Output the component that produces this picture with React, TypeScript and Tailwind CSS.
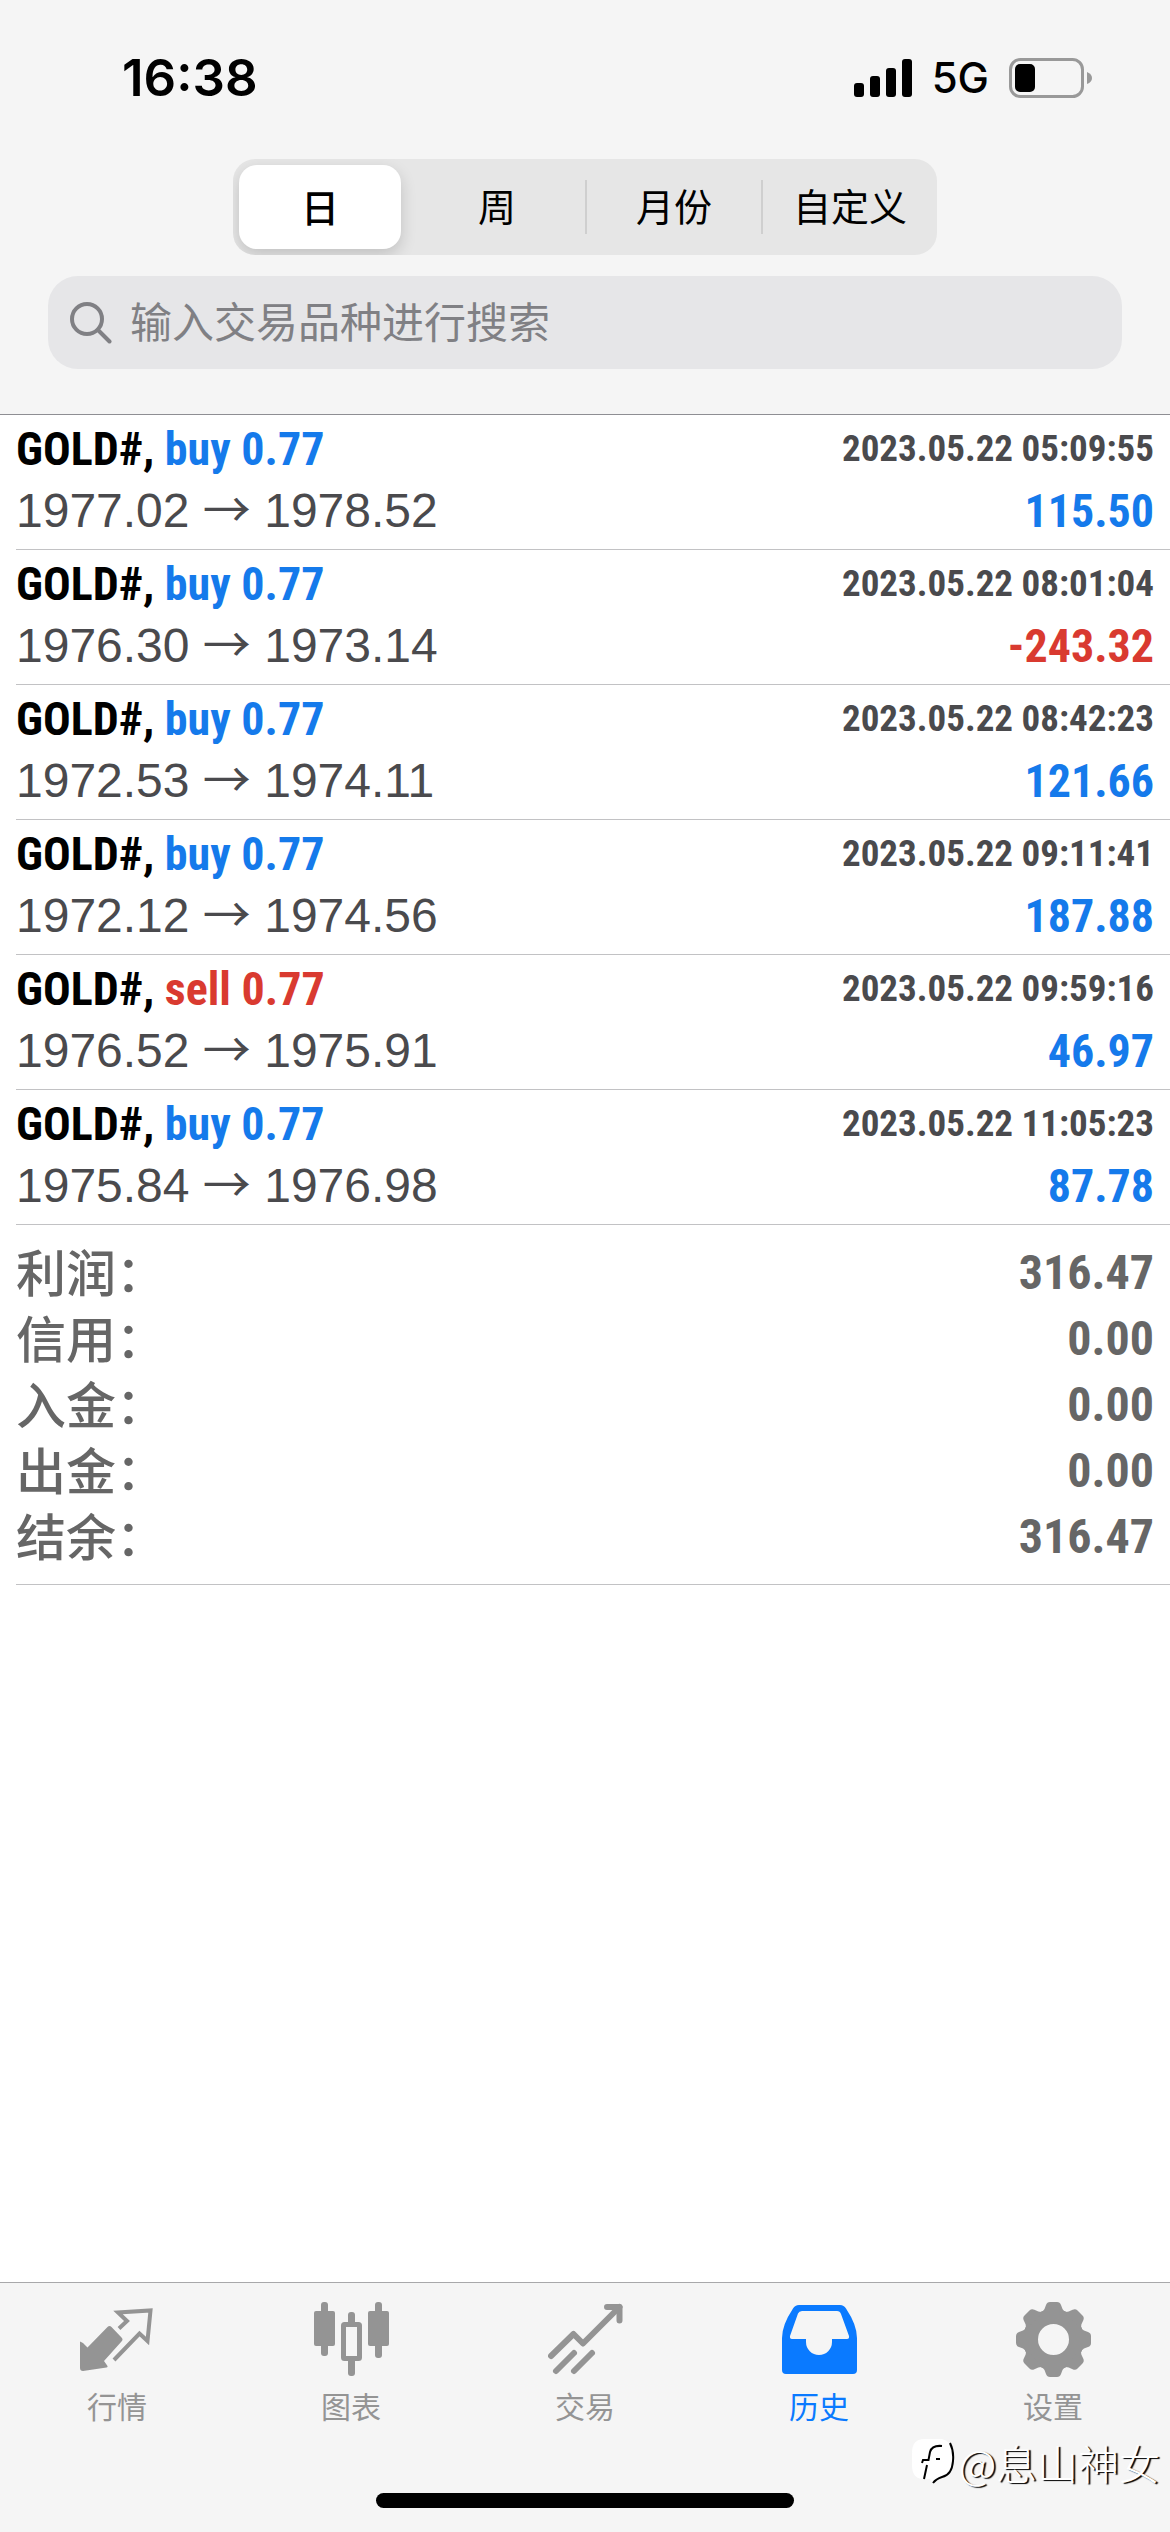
import type { ReactNode } from "react";

const NARROW = "font-['Roboto_Condensed','Liberation_Sans',sans-serif]";

const periods = ["日", "周", "月份", "自定义"];

const deals = [
  { id: 1, side: "buy", open: "1977.02", close: "1978.52", time: "2023.05.22 05:09:55", profit: "115.50" },
  { id: 2, side: "buy", open: "1976.30", close: "1973.14", time: "2023.05.22 08:01:04", profit: "-243.32" },
  { id: 3, side: "buy", open: "1972.53", close: "1974.11", time: "2023.05.22 08:42:23", profit: "121.66" },
  { id: 4, side: "buy", open: "1972.12", close: "1974.56", time: "2023.05.22 09:11:41", profit: "187.88" },
  { id: 5, side: "sell", open: "1976.52", close: "1975.91", time: "2023.05.22 09:59:16", profit: "46.97" },
  { id: 6, side: "buy", open: "1975.84", close: "1976.98", time: "2023.05.22 11:05:23", profit: "87.78" },
];

const totals = [
  { label: "利润", value: "316.47" },
  { label: "信用", value: "0.00" },
  { label: "入金", value: "0.00" },
  { label: "出金", value: "0.00" },
  { label: "结余", value: "316.47" },
];

function TabIcon({ children }: { children: ReactNode }) {
  return (
    <svg viewBox="0 0 75 75" className="h-[75px] w-[75px]" fill="currentColor" aria-hidden="true">
      {children}
    </svg>
  );
}

const tabs = [
  {
    label: "行情",
    icon: (
      <TabIcon>
        <path d="M0 39.5L3 41l4.500 4.500L27.500 25q2-2 4 0l10 10.500q2 2 0 4L24 59l3.500 5q.5 1-1 1.500L3 69q-3 0-3-3z" />
        <path
          d="M39 26.500l8-7.500-9-8.500L70.500 8.500 67.500 39l-8-7.500L34 58"
          fill="none"
          stroke="currentColor"
          strokeWidth="4"
        />
      </TabIcon>
    ),
  },
  {
    label: "图表",
    icon: (
      <TabIcon>
        <rect x="0" y="9" width="21" height="35" rx="2" />
        <rect x="7" y="0" width="7" height="54" rx="3" />
        <rect x="29.500" y="22.500" width="16" height="34" rx="1" fill="none" stroke="currentColor" strokeWidth="5" />
        <rect x="34" y="10" width="7" height="15" rx="3" />
        <rect x="34" y="56" width="7" height="18" rx="3" />
        <rect x="54" y="9" width="21" height="35" rx="2" />
        <rect x="61" y="0" width="7" height="56" rx="3" />
      </TabIcon>
    ),
  },
  {
    label: "交易",
    icon: (
      <TabIcon>
        <g fill="none" stroke="currentColor" strokeWidth="6" strokeLinecap="round" strokeLinejoin="round">
          <path d="M3 54l22.500-22L35 41.500 71.500 5" />
          <path d="M59 5h12.500v13.500" />
          <path d="M8 69l18-18M26 69l18-18" />
        </g>
      </TabIcon>
    ),
  },
  {
    label: "历史",
    active: true,
    icon: (
      <TabIcon>
        <path
          fillRule="evenodd"
          d="M17 3h41q4 0 6 3.500Q75 23 75 36v32q0 4-4 4H4q-4 0-4-4V36Q0 23 11 6.500 13 3 17 3zM20 9q-3 0-4 2.500L8 34q-.5 3 2 3h14v3a13 13 0 0 0 26 0v-3h15q2.500 0 2-3L59 12q-1-3-4-3z"
        />
      </TabIcon>
    ),
  },
  {
    label: "设置",
    icon: (
      <TabIcon>
        <circle cx="37.500" cy="37.500" r="23" fill="none" stroke="currentColor" strokeWidth="15" />
        {[0, 45, 90, 135, 180, 225, 270, 315].map((deg) => (
          <path
            key={deg}
            d="M24 11q3-1 4.500-4L30 3q1-3 4-3h7q3 0 4 3l1.500 4q1.500 3 4.500 4z"
            transform={`rotate(${deg} 37.5 37.5)`}
          />
        ))}
      </TabIcon>
    ),
  },
];

function StatusBar() {
  return (
    <div className="flex h-[159px] items-start justify-between pt-12 pr-[78px] pl-[122px] font-['Inter',sans-serif] text-black">
      <span className="text-[51px] leading-[60px] font-semibold">16:38</span>
      <div className="flex h-[60px] items-center gap-5">
        <svg viewBox="0 0 58 38" className="h-[38px] w-[58px]" aria-hidden="true">
          <rect x="0" y="24" width="10" height="14" rx="3" />
          <rect x="16" y="17" width="10" height="21" rx="3" />
          <rect x="32" y="9" width="10" height="29" rx="3" />
          <rect x="48" y="0" width="10" height="38" rx="3" />
        </svg>
        <span className="text-[42px] leading-[60px] font-medium">5G</span>
        <svg viewBox="0 0 83 40" className="h-10 w-[83px]" aria-hidden="true">
          <rect x="1.500" y="1.500" width="72" height="37" rx="10" fill="none" stroke="#999999" strokeWidth="3" />
          <rect x="6" y="6" width="20" height="28" rx="5" />
          <path d="M78 14q5 2 5 6t-5 6z" fill="#999999" />
        </svg>
      </div>
    </div>
  );
}

function PeriodSwitch() {
  return (
    <div className="mx-auto grid h-24 w-[704px] grid-cols-4 items-center overflow-hidden rounded-[22px] bg-[#e6e6e6]">
      {periods.map((name, i) => (
        <button
          key={name}
          type="button"
          className={
            i === 0
              ? "mr-2 ml-1.5 h-[84px] rounded-[18px] bg-white pb-1 text-[38px] font-medium text-black shadow-[0_6px_16px_rgba(0,0,0,0.16)]"
              : i === 1
                ? "h-[54px] pb-1 text-[38px] leading-none text-black"
                : "h-[54px] border-l-2 border-[#cfcfcf] pb-1 text-[38px] leading-none text-black"
          }
        >
          {name}
        </button>
      ))}
    </div>
  );
}

function SearchBox() {
  return (
    <label
      htmlFor="symbol"
      className="mx-12 mt-[21px] flex h-[93px] items-center gap-[18px] rounded-[30px] bg-[#e6e6e8] px-[22px]"
    >
      <svg viewBox="0 0 42 42" className="h-[42px] w-[42px] shrink-0" fill="none" stroke="#808084" strokeWidth="4" strokeLinecap="round" aria-hidden="true">
        <circle cx="17" cy="17" r="15" />
        <path d="M28 28l11.500 11.500" />
      </svg>
      <input
        id="symbol"
        type="search"
        aria-label="搜索"
        placeholder="输入交易品种进行搜索"
        className="w-full bg-transparent pb-1.5 text-[42px] leading-[64px] text-black outline-none placeholder:text-[#808084]"
      />
    </label>
  );
}

export default function App() {
  return (
    <div className="relative flex min-h-screen flex-col bg-white font-['Noto_Sans_CJK_SC',sans-serif]">
      <header className="border-b border-[#8e8e93] bg-[#f5f5f5] pb-[45px]">
        <StatusBar />
        <PeriodSwitch />
        <SearchBox />
      </header>

      <main className="flex-1">
        <ul className="pl-4">
          {deals.map((deal) => (
            <li key={deal.id} className="h-[135px] border-b border-[#c2c2c4] pt-1 pr-4">
              <div className={`flex items-center justify-between font-bold ${NARROW}`}>
                <p className="text-[46px] leading-[60px] text-black">
                  GOLD#,{" "}
                  <span className={deal.side === "buy" ? "text-[#157aeb]" : "text-[#d93a30]"}>{deal.side} 0.77</span>
                </p>
                <time className="text-[37px] leading-[60px] text-[#4a4a4d]">{deal.time}</time>
              </div>
              <div className="flex items-center justify-between">
                <p className="font-['Liberation_Sans',sans-serif] text-[48px] leading-[64px] text-[#4a4a4d]">
                  {deal.open}{" "}
                  <span className="font-['Noto_Sans_CJK_SC',sans-serif] leading-none font-normal">→</span> {deal.close}
                </p>
                <p
                  className={`text-[46px] leading-[64px] font-bold ${NARROW} ${deal.profit.startsWith("-") ? "text-[#d93a30]" : "text-[#157aeb]"}`}
                >
                  {deal.profit}
                </p>
              </div>
            </li>
          ))}
        </ul>

        <dl className="ml-4 border-b border-[#c2c2c4] pt-[15px] pr-4 pb-[14px] text-[#666666]">
          {totals.map((row) => (
            <div key={row.label} className="flex h-[66px] items-start justify-between">
              <dt className="text-[50px] leading-[60px] font-medium">{row.label}：</dt>
              <dd className={`text-[48px] leading-[66px] font-bold ${NARROW}`}>{row.value}</dd>
            </div>
          ))}
        </dl>
      </main>

      <nav className="border-t border-[#a8a8aa] bg-[#f5f5f5] pt-[19px] pb-6">
        <div className="grid h-[191px] grid-cols-5 items-start">
          {tabs.map((tab) => (
            <button
              key={tab.label}
              type="button"
              className={`flex flex-col items-center gap-2 text-[30px] leading-10 ${tab.active ? "text-[#0a7aff]" : "text-[#949494]"}`}
            >
              {tab.icon}
              {tab.label}
            </button>
          ))}
        </div>
        <div className="mx-auto h-[15px] w-[418px] rounded-full bg-black" />
      </nav>

      {/* Author mark floating over the tab bar */}
      <div className="absolute right-2.5 bottom-10 flex items-center text-[41px] leading-[60px] font-light text-white [text-shadow:2px_1px_1px_#000]">
        <svg viewBox="0 0 44 50" className="mr-1 h-[50px] w-11" fill="none" aria-hidden="true">
          <path d="M13 2h18q10 2 10 14v10q0 14-12 15l-7 5-3-4h-8Q1 41 1 28V16Q1 2 13 2z" fill="#ffffff" />
          <path d="M39 6q4 8 3 18-1 14-11 16-6 2-9 6" stroke="#000000" strokeWidth="2" />
          <path d="M31 9q-10-1-12 6l-1.500 8H12l-1 3M16 28l-3 14M25 22h4" stroke="#000000" strokeWidth="2" />
        </svg>
        @息山神女
      </div>
    </div>
  );
}
